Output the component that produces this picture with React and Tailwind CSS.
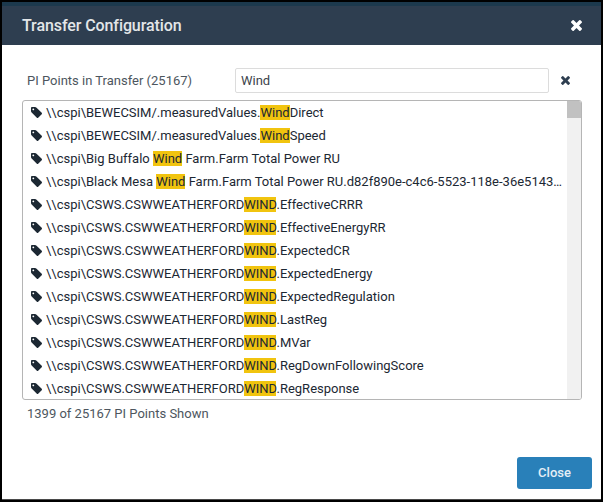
const MATCH = /(wind)/i;

const points = [
  "\\\\cspi\\BEWECSIM/.measuredValues.WindDirect",
  "\\\\cspi\\BEWECSIM/.measuredValues.WindSpeed",
  "\\\\cspi\\Big Buffalo Wind Farm.Farm Total Power RU",
  "\\\\cspi\\Black Mesa Wind Farm.Farm Total Power RU.d82f890e-c4c6-5523-118e-36e5143…",
  "\\\\cspi\\CSWS.CSWWEATHERFORDWIND.EffectiveCRRR",
  "\\\\cspi\\CSWS.CSWWEATHERFORDWIND.EffectiveEnergyRR",
  "\\\\cspi\\CSWS.CSWWEATHERFORDWIND.ExpectedCR",
  "\\\\cspi\\CSWS.CSWWEATHERFORDWIND.ExpectedEnergy",
  "\\\\cspi\\CSWS.CSWWEATHERFORDWIND.ExpectedRegulation",
  "\\\\cspi\\CSWS.CSWWEATHERFORDWIND.LastReg",
  "\\\\cspi\\CSWS.CSWWEATHERFORDWIND.MVar",
  "\\\\cspi\\CSWS.CSWWEATHERFORDWIND.RegDownFollowingScore",
  "\\\\cspi\\CSWS.CSWWEATHERFORDWIND.RegResponse",
];

function CrossIcon({ className }) {
  return (
    <svg viewBox="110 366 1188 1188" fill="currentColor" className={className}>
      <path d="M1298 1322q0 40-28 68l-136 136q-28 28-68 28t-68-28l-294-294-294 294q-28 28-68 28t-68-28l-136-136q-28-28-28-68t28-68l294-294-294-294q-28-28-28-68t28-68l136-136q28-28 68-28t68 28l294 294 294-294q28-28 68-28t68 28l136 136q28 28 28 68t-28 68l-294 294 294 294q28 28 28 68z" />
    </svg>
  );
}

function TagIcon({ className }) {
  return (
    <svg viewBox="0 128 1515 1515" fill="currentColor" className={className}>
      <path d="M448 448q0-53-37.5-90.5T320 320t-90.5 37.5T192 448t37.5 90.5T320 576t90.5-37.5T448 448zm1067 576q0 53-37 90l-491 492q-39 37-91 37-53 0-90-37L91 890q-38-37-64.5-101T0 672V256q0-52 38-90t90-38h416q53 0 117 26.5T763 219l715 714q37 39 37 91z" />
    </svg>
  );
}

function PointRow({ name }) {
  return (
    <li className="flex h-[23px] items-center pl-2">
      <TagIcon className="mr-1 size-[11px] shrink-0 text-[#1c2833]" />
      <span className="leading-[23px] whitespace-nowrap">
        {name.split(MATCH).map((part, i) =>
          MATCH.test(part) ? (
            <mark key={i} className="bg-[#f1c40f] text-inherit">{part}</mark>
          ) : (
            part
          )
        )}
      </span>
    </li>
  );
}

export default function App() {
  return (
    <div className="flex h-[502px] w-[603px] flex-col border-2 border-black bg-white font-[Roboto,sans-serif] text-[13px] text-[#1c2833]">
      <div className="h-1 shrink-0 bg-[#1c394d]" />
      <header className="flex h-[39px] shrink-0 items-center justify-between bg-[#2e3e50] pr-[19px] pl-5 text-white">
        <h1 className="text-base font-medium tracking-[-0.09px] text-[#e3e6e8]">Transfer Configuration</h1>
        <button aria-label="Close dialog" className="pb-px"><CrossIcon className="size-[11px]" /></button>
      </header>
      <main className="flex grow flex-col px-5 pt-[23px]">
        <div className="flex h-[25px] items-center">
          <label className="w-[213px] pl-[5px] text-[#4d565e]">PI Points in Transfer (25167)</label>
          <input className="h-[25px] w-[314px] rounded-[2px] border border-[#dcdcdc] px-[5px] text-[#3c444c] outline-none" defaultValue="Wind" />
          <button aria-label="Clear" className="ml-3"><CrossIcon className="size-[9px] text-[#2e3e50]" /></button>
        </div>
        <div className="mt-[7px] flex h-[300px] w-[560px] overflow-hidden rounded-[3px] border border-[#b5b5b5]">
          <ul className="w-[544px]">
            {points.map((name) => <PointRow key={name} name={name} />)}
          </ul>
          <div className="w-[14px] bg-[#f1f1f1]">
            <div className="h-[17px] bg-[#c1c1c1]" />
          </div>
        </div>
        <p className="mt-1 pl-[5px] leading-5 text-[#4d565e]">1399 of 25167 PI Points Shown</p>
      </main>
      <footer className="flex shrink-0 justify-end border-b border-[#4a4a4a] pr-[9px] pb-[10px]">
        <button className="h-8 w-[75px] rounded-[3px] bg-[#2980b9] font-medium text-[#e3eef6]">Close</button>
      </footer>
    </div>
  );
}
